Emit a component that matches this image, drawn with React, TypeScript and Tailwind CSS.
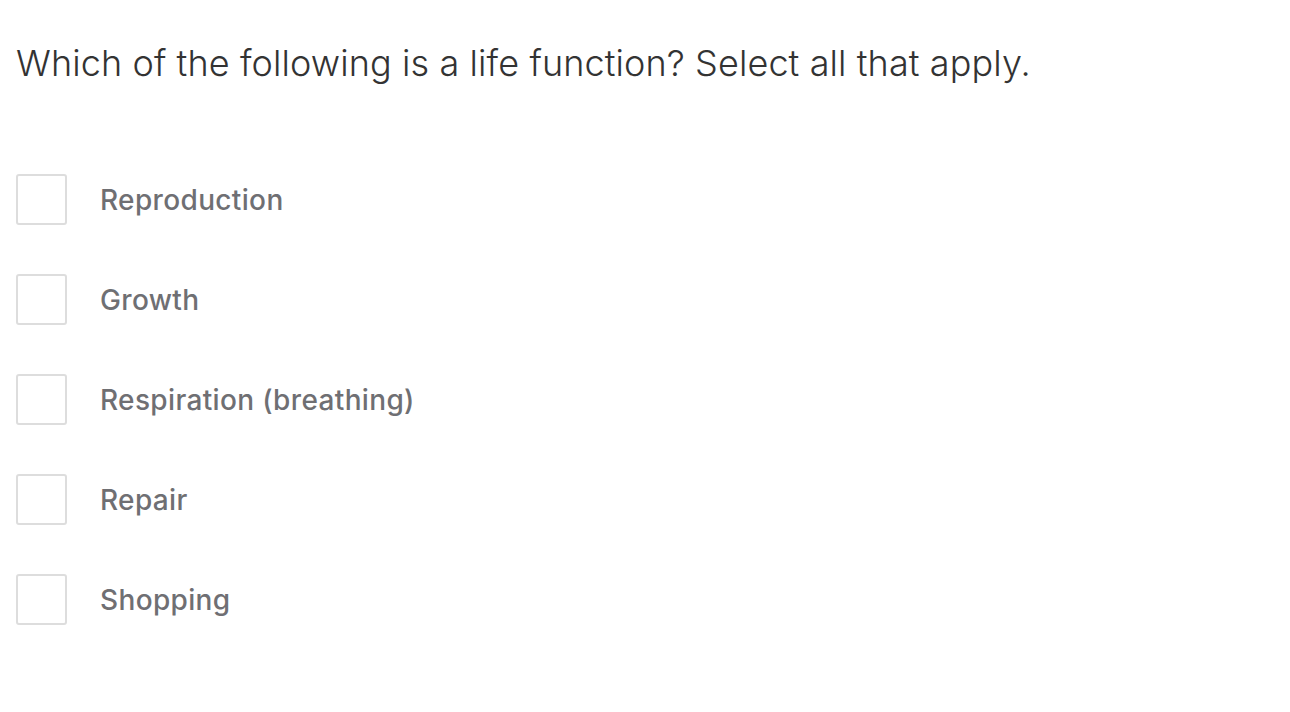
import React from "react";

const options = [
  "Reproduction",
  "Growth",
  "Respiration (breathing)",
  "Repair",
  "Shopping",
];

export default function App() {
  return (
    <div
      className="min-h-screen bg-white px-4 pt-[38px]"
      style={{ fontFamily: "Inter, 'Noto Sans', sans-serif" }}
    >
      <h1 className="text-[36px] leading-[50px] font-light text-[#333333] tracking-[0.1px]">
        Which of the following is a life function? Select all that apply.
      </h1>

      <div className="mt-[86px] flex flex-col gap-[49px]">
        {options.map((opt) => (
          <label key={opt} className="flex items-center gap-[33px]">
            <span className="h-[51px] w-[51px] shrink-0 rounded-[3px] border-2 border-[#dddddd] bg-white" />
            <span className="text-[28px] font-medium text-[#6f6f73] tracking-[0.35px]">{opt}</span>
          </label>
        ))}
      </div>
    </div>
  );
}
